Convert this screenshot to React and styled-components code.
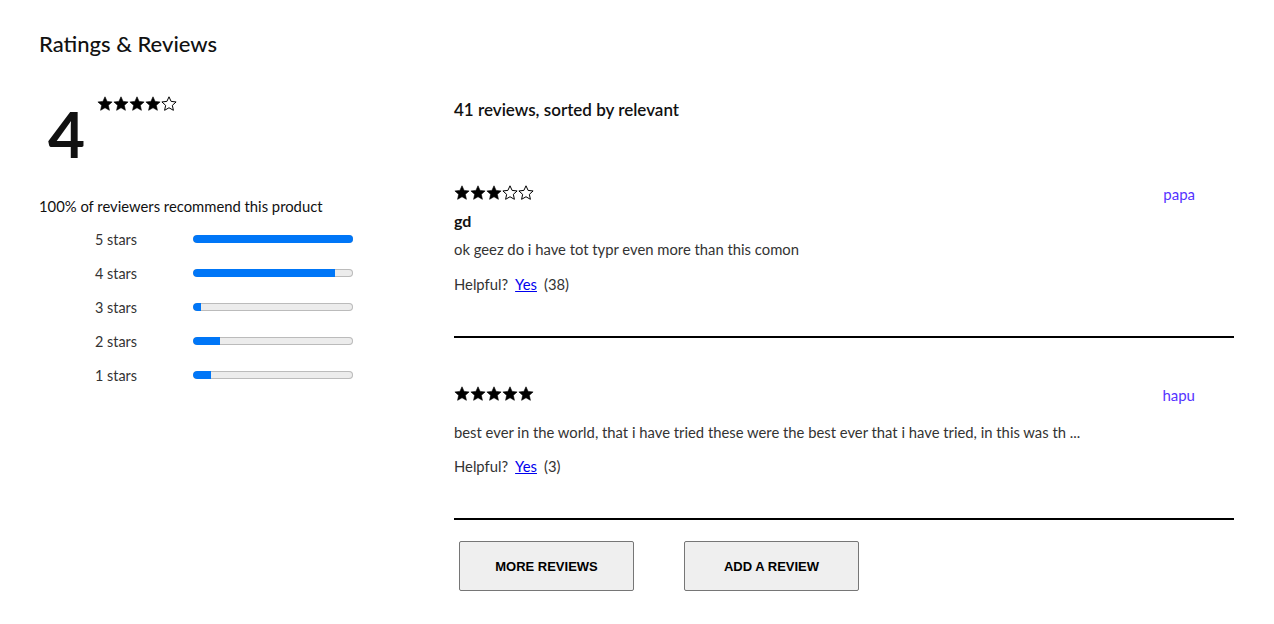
import React from "react";
import styled, { createGlobalStyle } from "styled-components";

const GlobalStyle = createGlobalStyle`
  body {
    margin: 0;
    background: #fff;
    font-family: "Lato", "Open Sans", sans-serif;
    color: #111;
  }
`;

const Page = styled.div`
  padding: 24px 40px 30px 39px;
`;

const Title = styled.h2`
  margin: 0;
  font-size: 22px;
  font-weight: 500;
  line-height: 40px;
`;

const Columns = styled.div`
  display: grid;
  grid-template-columns: 415px 780px;
  margin-top: 26px;
`;

const Left = styled.div`
  display: flex;
  flex-direction: column;
`;

const Summary = styled.div`
  display: flex;
  align-items: flex-start;
`;

const BigNumber = styled.div`
  font-size: 64px;
  font-weight: 700;
  line-height: 64px;
  margin-top: 12px;
  padding-left: 9px;
`;

const StarRow = styled.div`
  display: flex;
  margin-top: ${(p) => p.$top || 0}px;
  margin-left: ${(p) => p.$left || 0}px;
`;

const Recommend = styled.div`
  margin-top: 30px;
  font-size: 14.8px;
  line-height: 20px;
`;

const Breakdown = styled.div`
  margin-top: 6px;
  display: flex;
  flex-direction: column;
`;

const BarRow = styled.div`
  display: grid;
  grid-template-columns: 98px 160px;
  align-items: center;
  height: 34px;
  padding-left: 56px;
`;

const BarLabel = styled.span`
  font-size: 14.4px;
  color: #333;
`;

const Track = styled.div`
  height: 8px;
  border-radius: 4px;
  background: #ececec;
  box-shadow: inset 0 0 0 1px #bbb;
  overflow: hidden;
`;

const Fill = styled.div`
  height: 100%;
  background: #0076f7;
  border-radius: 4px 0 0 4px;
`;

const Right = styled.div`
  display: flex;
  flex-direction: column;
`;

const ListHeading = styled.h3`
  margin: 8px 0 15px;
  font-size: 17px;
  font-weight: 600;
  line-height: 24px;
`;

const Review = styled.div`
  padding: 48px 0 42px;
  border-bottom: 2px solid #000;
`;

const ReviewTop = styled.div`
  display: flex;
  justify-content: space-between;
  align-items: center;
  height: 16px;
`;

const User = styled.span`
  font-size: 15px;
  color: #5533ff;
  margin-right: 39px;
  margin-top: 2px;
`;

const ReviewTitle = styled.div`
  margin-top: 10px;
  font-size: 16px;
  font-weight: 700;
  line-height: 20px;
`;

const Body = styled.p`
  margin: ${(p) => (p.$afterTitle ? 8 : 20)}px 0 0;
  font-size: 14.8px;
  line-height: 20px;
  color: #333;
`;

const Helpful = styled.div`
  margin-top: ${(p) => (p.$tight ? 14 : 15)}px;
  display: flex;
  gap: 7px;
  font-size: 14.8px;
  line-height: 20px;
  color: #333;
`;

const YesLink = styled.a`
  color: #0000ee;
  text-decoration: underline;
  cursor: pointer;
`;

const Actions = styled.div`
  display: flex;
  gap: 50px;
  margin-top: 21px;
  padding-left: 5px;
`;

const Button = styled.button`
  width: 175px;
  height: 50px;
  background: #efefef;
  border: 1px solid #767676;
  border-radius: 2px;
  font-family: "Liberation Sans", Arial, sans-serif;
  font-size: 13px;
  font-weight: 700;
  color: #000;
`;

const StarPath =
  "M8 0.8l2.1 4.6 5 .55-3.75 3.4 1.05 4.95L8 11.75 3.6 14.3l1.05-4.95L.9 5.95l5-.55z";

const Star = ({ filled, size = 16 }) => (
  <svg width={size} height={size} viewBox="0 0 16 16">
    <path
      d={StarPath}
      fill={filled ? "#000" : "#fff"}
      stroke="#000"
      strokeWidth={filled ? 0.6 : 1}
      strokeLinejoin="round"
    />
  </svg>
);

const Stars = ({ value, top, left }) => (
  <StarRow $top={top} $left={left}>
    {[1, 2, 3, 4, 5].map((i) => (
      <Star key={i} filled={i <= value} />
    ))}
  </StarRow>
);

const bars = [
  { label: "5 stars", pct: 100 },
  { label: "4 stars", pct: 89 },
  { label: "3 stars", pct: 5 },
  { label: "2 stars", pct: 17 },
  { label: "1 stars", pct: 11 },
];

const reviews = [
  {
    rating: 3,
    user: "papa",
    title: "gd",
    body: "ok geez do i have tot typr even more than this comon",
    helpful: 38,
  },
  {
    rating: 5,
    user: "hapu",
    body: "best ever in the world, that i have tried these were the best ever that i have tried, in this was th ...",
    helpful: 3,
  },
];

export default function App() {
  return (
    <Page>
      <GlobalStyle />
      <Title>Ratings &amp; Reviews</Title>
      <Columns>
        <Left>
          <Summary>
            <BigNumber>4</BigNumber>
            <Stars value={4} top={6} left={12} />
          </Summary>
          <Recommend>100% of reviewers recommend this product</Recommend>
          <Breakdown>
            {bars.map((b) => (
              <BarRow key={b.label}>
                <BarLabel>{b.label}</BarLabel>
                <Track>
                  <Fill style={{ width: `${b.pct}%` }} />
                </Track>
              </BarRow>
            ))}
          </Breakdown>
        </Left>
        <Right>
          <ListHeading>41 reviews, sorted by relevant</ListHeading>
          {reviews.map((r) => (
            <Review key={r.user}>
              <ReviewTop>
                <Stars value={r.rating} />
                <User>{r.user}</User>
              </ReviewTop>
              {r.title && <ReviewTitle>{r.title}</ReviewTitle>}
              <Body $afterTitle={!!r.title}>{r.body}</Body>
              <Helpful $tight={!r.title}>
                <span>Helpful?</span>
                <YesLink>Yes</YesLink>
                <span>({r.helpful})</span>
              </Helpful>
            </Review>
          ))}
          <Actions>
            <Button>MORE REVIEWS</Button>
            <Button>ADD A REVIEW</Button>
          </Actions>
        </Right>
      </Columns>
    </Page>
  );
}
